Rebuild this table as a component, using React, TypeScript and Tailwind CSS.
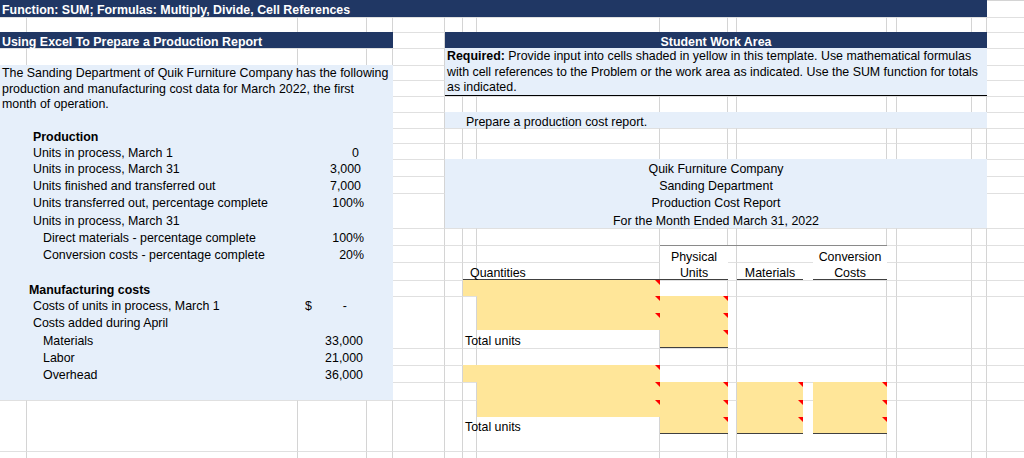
import React from "react";

function Tri() {
  return (
    <span className="absolute right-0 top-0 h-0 w-0 border-l-[5px] border-t-[5px] border-l-transparent border-t-[#ff0000]" />
  );
}

const GRID_COLS =
  "grid-cols-[27px_271px_69px_26px_52px_18px_14px_183px_68px_9px_66px_10px_74px_10px_75px_15px_37px]";
const GRID_ROWS =
  "grid-rows-[17px_15px_16px_17px_15px_16px_16px_16px_15px_16px_17px_17px_17px_18px_17px_17px_18px_16px_17px_17px_18px_17px_17px_18px_17px_17px_17px_7px]";

const T = "flex items-center pt-[4px] whitespace-nowrap";

export default function App() {
  const noRight = [10, 11, 16];
  const noBottom = [12, 18, 19, 24, 25, 27];
  const cells: React.ReactNode[] = [];
  for (let r = 0; r < 28; r++) {
    for (let c = 0; c < 17; c++) {
      const right = noRight.includes(c) ? "" : "border-r border-r-[#d4d4d4]";
      const bottom = noBottom.includes(r) ? "" : "border-b border-b-[#e0e0e0]";
      cells.push(<div key={`${r}-${c}`} className={`${right} ${bottom}`} />);
    }
  }

  return (
    <div
      className="grid h-[458px] w-[1024px] overflow-hidden bg-white text-[12.4px] text-black"
      style={{ fontFamily: '"Liberation Sans", Arial, sans-serif' }}
    >
      {/* gridlines layer */}
      <div className={`[grid-area:1/1] grid ${GRID_COLS} ${GRID_ROWS} border-t border-t-[#d4d4d4]`}>{cells}</div>

      {/* content layer */}
      <div className={`[grid-area:1/1] grid ${GRID_COLS} ${GRID_ROWS} leading-none`}>
        {/* top bar */}
        <div className={`col-start-1 col-end-17 row-start-1 row-end-2 bg-[#203764] pl-[2px] font-bold text-white ${T}`}>
          Function: SUM; Formulas: Multiply, Divide, Cell References
        </div>

        {/* left header */}
        <div className={`col-start-1 col-end-5 row-start-3 row-end-4 bg-[#203764] pl-[2px] font-bold text-white ${T}`}>
          Using Excel To Prepare a Production Report
        </div>

        {/* right header */}
        <div className={`col-start-6 col-end-17 row-start-3 row-end-4 justify-center bg-[#203764] font-bold text-white ${T}`}>
          Student Work Area
        </div>

        {/* required block */}
        <div className="col-start-6 col-end-17 row-start-4 row-end-7 border-b border-b-black bg-[#e6effa] pl-[2px] pt-[1px] leading-[15.5px] whitespace-nowrap">
          <span className="font-bold">Required:</span> Provide input into cells shaded in yellow in this template. Use mathematical formulas
          <br />
          with cell references to the Problem or the work area as indicated. Use the SUM function for totals
          <br />
          as indicated.
        </div>

        {/* left panel background */}
        <div className="col-start-1 col-end-5 row-start-5 row-end-25 bg-[#e6effa]" />

        {/* left paragraph */}
        <div className="col-start-1 col-end-5 row-start-5 row-end-8 pl-[2px] pt-[1px] leading-[15.5px] whitespace-nowrap">
          The Sanding Department of Quik Furniture Company has the following
          <br />
          production and manufacturing cost data for March 2022, the first
          <br />
          month of operation.
        </div>

        <div className={`col-start-1 col-end-3 row-start-9 row-end-10 pl-[33px] font-bold ${T}`}>Production</div>

        <div className={`col-start-1 col-end-3 row-start-10 row-end-11 pl-[33px] ${T}`}>Units in process, March 1</div>
        <div className={`col-start-3 col-end-4 row-start-10 row-end-11 justify-end pr-[8px] ${T}`}>0</div>

        <div className={`col-start-1 col-end-3 row-start-11 row-end-12 pl-[33px] ${T}`}>Units in process, March 31</div>
        <div className={`col-start-3 col-end-4 row-start-11 row-end-12 justify-end pr-[6px] ${T}`}>3,000</div>

        <div className={`col-start-1 col-end-3 row-start-12 row-end-13 pl-[33px] ${T}`}>Units finished and transferred out</div>
        <div className={`col-start-3 col-end-4 row-start-12 row-end-13 justify-end pr-[6px] ${T}`}>7,000</div>

        <div className={`col-start-1 col-end-3 row-start-13 row-end-14 pl-[33px] ${T}`}>Units transferred out, percentage complete</div>
        <div className={`col-start-3 col-end-4 row-start-13 row-end-14 justify-end pr-[3px] ${T}`}>100%</div>

        <div className={`col-start-1 col-end-3 row-start-14 row-end-15 pl-[33px] ${T}`}>Units in process, March 31</div>

        <div className={`col-start-1 col-end-3 row-start-15 row-end-16 pl-[43px] ${T}`}>Direct materials - percentage complete</div>
        <div className={`col-start-3 col-end-4 row-start-15 row-end-16 justify-end pr-[3px] ${T}`}>100%</div>

        <div className={`col-start-1 col-end-3 row-start-16 row-end-17 pl-[43px] ${T}`}>Conversion costs - percentage complete</div>
        <div className={`col-start-3 col-end-4 row-start-16 row-end-17 justify-end pr-[3px] ${T}`}>20%</div>

        <div className={`col-start-1 col-end-3 row-start-18 row-end-19 pl-[29px] font-bold ${T}`}>Manufacturing costs</div>

        <div className={`col-start-1 col-end-3 row-start-19 row-end-20 pl-[33px] ${T}`}>Costs of units in process, March 1</div>
        <div className={`col-start-3 col-end-4 row-start-19 row-end-20 justify-between pl-[7px] pr-[20px] ${T}`}>
          <span>$</span>
          <span>-</span>
        </div>

        <div className={`col-start-1 col-end-3 row-start-20 row-end-21 pl-[33px] ${T}`}>Costs added during April</div>

        <div className={`col-start-1 col-end-3 row-start-21 row-end-22 pl-[43px] ${T}`}>Materials</div>
        <div className={`col-start-3 col-end-4 row-start-21 row-end-22 justify-end pr-[4px] ${T}`}>33,000</div>

        <div className={`col-start-1 col-end-3 row-start-22 row-end-23 pl-[43px] ${T}`}>Labor</div>
        <div className={`col-start-3 col-end-4 row-start-22 row-end-23 justify-end pr-[4px] ${T}`}>21,000</div>

        <div className={`col-start-1 col-end-3 row-start-23 row-end-24 pl-[43px] ${T}`}>Overhead</div>
        <div className={`col-start-3 col-end-4 row-start-23 row-end-24 justify-end pr-[4px] ${T}`}>36,000</div>

        {/* prepare row */}
        <div className={`col-start-6 col-end-17 row-start-8 row-end-9 bg-[#e6effa] pl-[21px] ${T}`}>
          Prepare a production cost report.
        </div>

        {/* title block */}
        <div className="col-start-6 col-end-17 row-start-11 row-end-15 bg-[#e6effa]" />
        <div className={`col-start-6 col-end-17 row-start-11 row-end-12 justify-center ${T}`}>Quik Furniture Company</div>
        <div className={`col-start-6 col-end-17 row-start-12 row-end-13 justify-center ${T}`}>Sanding Department</div>
        <div className={`col-start-6 col-end-17 row-start-13 row-end-14 justify-center ${T}`}>Production Cost Report</div>
        <div className={`col-start-6 col-end-17 row-start-14 row-end-15 justify-center ${T}`}>For the Month Ended March 31, 2022</div>

        {/* column headers */}
        <div className="col-start-10 col-end-13 row-start-16 row-end-17 border-t border-t-[#8a8a8a]" />
        <div className="col-start-9 col-end-10 row-start-16 row-end-18 flex flex-col items-center justify-center gap-[3px] border-t border-b border-t-[#8a8a8a] border-b-[#404040] bg-white pt-[5px]">
          <span>Physical</span>
          <span>Units</span>
        </div>
        <div className="col-start-13 col-end-14 row-start-16 row-end-18 flex flex-col items-center justify-center gap-[3px] border-t border-b border-t-[#8a8a8a] border-b-[#404040] bg-white pt-[5px]">
          <span>Conversion</span>
          <span>Costs</span>
        </div>
        <div className="col-start-7 col-end-9 row-start-17 row-end-18 flex items-center border-b border-b-[#404040] pl-[7px] pt-[6px]">
          Quantities
        </div>
        <div className="col-start-11 col-end-12 row-start-17 row-end-18 flex items-center justify-center border-b border-b-[#404040] pt-[6px]">
          Materials
        </div>

        {/* block 1 */}
        <div className="relative col-start-7 col-end-9 row-start-18 row-end-19 bg-[#ffe699]"><Tri /></div>
        <div className="relative col-start-8 col-end-9 row-start-19 row-end-20 bg-[#ffe699]"><Tri /></div>
        <div className="relative col-start-8 col-end-9 row-start-20 row-end-21 bg-[#ffe699]"><Tri /></div>
        <div className="relative col-start-9 col-end-10 row-start-19 row-end-20 bg-[#ffe699]"><Tri /></div>
        <div className="relative col-start-9 col-end-10 row-start-20 row-end-21 bg-[#ffe699]"><Tri /></div>
        <div className="relative col-start-9 col-end-10 row-start-21 row-end-22 border-b border-b-[#404040] bg-[#ffe699]"><Tri /></div>
        <div className={`col-start-7 col-end-9 row-start-21 row-end-22 pl-[2px] ${T}`}>Total units</div>

        {/* block 2 */}
        <div className="relative col-start-7 col-end-9 row-start-23 row-end-24 bg-[#ffe699]"><Tri /></div>
        <div className="relative col-start-8 col-end-9 row-start-24 row-end-25 bg-[#ffe699]"><Tri /></div>
        <div className="relative col-start-8 col-end-9 row-start-25 row-end-26 bg-[#ffe699]"><Tri /></div>

        <div className="relative col-start-9 col-end-10 row-start-24 row-end-25 bg-[#ffe699]"><Tri /></div>
        <div className="relative col-start-9 col-end-10 row-start-25 row-end-26 bg-[#ffe699]"><Tri /></div>
        <div className="relative col-start-9 col-end-10 row-start-26 row-end-27 border-b border-b-[#404040] bg-[#ffe699]"><Tri /></div>

        <div className="relative col-start-11 col-end-12 row-start-24 row-end-25 bg-[#ffe699]"><Tri /></div>
        <div className="relative col-start-11 col-end-12 row-start-25 row-end-26 bg-[#ffe699]"><Tri /></div>
        <div className="relative col-start-11 col-end-12 row-start-26 row-end-27 border-b border-b-[#404040] bg-[#ffe699]"><Tri /></div>

        <div className="relative col-start-13 col-end-14 row-start-24 row-end-25 bg-[#ffe699]"><Tri /></div>
        <div className="relative col-start-13 col-end-14 row-start-25 row-end-26 bg-[#ffe699]"><Tri /></div>
        <div className="relative col-start-13 col-end-14 row-start-26 row-end-27 border-b border-b-[#404040] bg-[#ffe699]"><Tri /></div>

        <div className={`col-start-7 col-end-9 row-start-26 row-end-27 pl-[2px] ${T}`}>Total units</div>
      </div>
    </div>
  );
}
